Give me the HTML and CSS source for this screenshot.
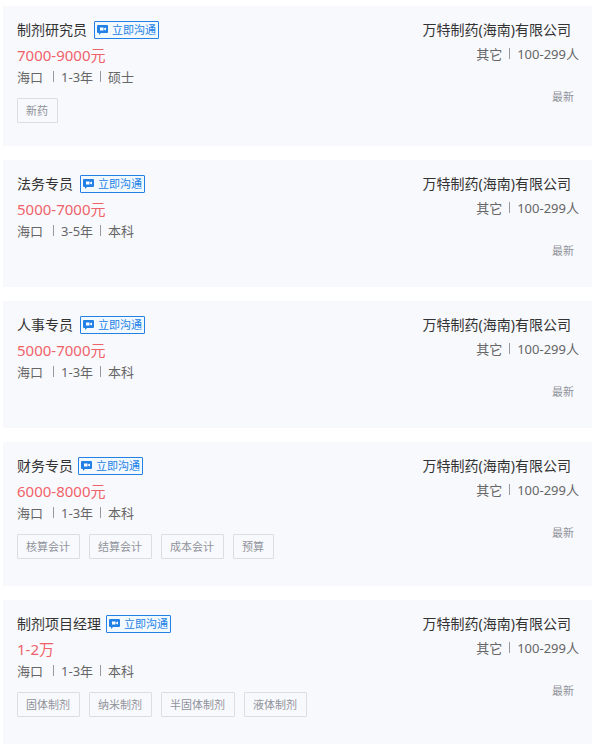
FILE: index.html
```html
<!DOCTYPE html>
<html lang="zh-CN">
<head>
  <meta charset="UTF-8" />
  <meta name="viewport" content="width=device-width, initial-scale=1.0"/>
  <title>万特制药(海南)有限公司 招聘职位</title>
  <link rel="stylesheet" href="styles.css">
</head>
<body>

<!-- chat icon shared by all the buttons -->
<svg class="sprite" aria-hidden="true">
  <symbol id="icon-chat" viewBox="0 0 11 10">
    <path fill="currentColor" d="M1 0h9a1 1 0 0 1 1 1v6a1 1 0 0 1-1 1H4l-2 2V8H1a1 1 0 0 1-1-1V1a1 1 0 0 1 1-1z"/>
    <path fill="#fff" d="M3 2.5h3.5v3H3zM7 3.5l2-1v3l-2-1z"/>
  </symbol>
</svg>

<main class="job-list">

  <article class="job-card short">
    <div class="job-info">
      <div class="job-head">
        <h2>制剂研究员</h2>
        <button type="button" class="chat-btn"><svg><use href="#icon-chat"/></svg>立即沟通</button>
      </div>
      <p class="salary">7000-9000元</p>
      <p class="meta"><span class="city">海口</span><span>1-3年</span><span>硕士</span></p>
      <ul class="tags">
        <li>新药</li>
      </ul>
    </div>
    <div class="company">
      <h3>万特制药(海南)有限公司</h3>
      <p class="meta"><span>其它</span><span>100-299人</span></p>
      <p class="date">最新</p>
    </div>
  </article>

  <article class="job-card">
    <div class="job-info">
      <div class="job-head">
        <h2>法务专员</h2>
        <button type="button" class="chat-btn"><svg><use href="#icon-chat"/></svg>立即沟通</button>
      </div>
      <p class="salary">5000-7000元</p>
      <p class="meta"><span class="city">海口</span><span>3-5年</span><span>本科</span></p>
    </div>
    <div class="company">
      <h3>万特制药(海南)有限公司</h3>
      <p class="meta"><span>其它</span><span>100-299人</span></p>
      <p class="date">最新</p>
    </div>
  </article>

  <article class="job-card">
    <div class="job-info">
      <div class="job-head">
        <h2>人事专员</h2>
        <button type="button" class="chat-btn"><svg><use href="#icon-chat"/></svg>立即沟通</button>
      </div>
      <p class="salary">5000-7000元</p>
      <p class="meta"><span class="city">海口</span><span>1-3年</span><span>本科</span></p>
    </div>
    <div class="company">
      <h3>万特制药(海南)有限公司</h3>
      <p class="meta"><span>其它</span><span>100-299人</span></p>
      <p class="date">最新</p>
    </div>
  </article>

  <article class="job-card">
    <div class="job-info">
      <div class="job-head tight">
        <h2>财务专员</h2>
        <button type="button" class="chat-btn"><svg><use href="#icon-chat"/></svg>立即沟通</button>
      </div>
      <p class="salary">6000-8000元</p>
      <p class="meta"><span class="city">海口</span><span>1-3年</span><span>本科</span></p>
      <ul class="tags">
        <li>核算会计</li>
        <li>结算会计</li>
        <li>成本会计</li>
        <li>预算</li>
      </ul>
    </div>
    <div class="company">
      <h3>万特制药(海南)有限公司</h3>
      <p class="meta"><span>其它</span><span>100-299人</span></p>
      <p class="date">最新</p>
    </div>
  </article>

  <article class="job-card">
    <div class="job-info">
      <div class="job-head tight">
        <h2>制剂项目经理</h2>
        <button type="button" class="chat-btn"><svg><use href="#icon-chat"/></svg>立即沟通</button>
      </div>
      <p class="salary">1-2万</p>
      <p class="meta"><span class="city">海口</span><span>1-3年</span><span>本科</span></p>
      <ul class="tags">
        <li>固体制剂</li>
        <li>纳米制剂</li>
        <li>半固体制剂</li>
        <li>液体制剂</li>
      </ul>
    </div>
    <div class="company">
      <h3>万特制药(海南)有限公司</h3>
      <p class="meta"><span>其它</span><span>100-299人</span></p>
      <p class="date">最新</p>
    </div>
  </article>

</main>

</body>
</html>
```
FILE: styles.css
```css
:root {
  --blue: #2381e6;
  --red: #f0626a;
  --card: #f8f9fd;
  --title: #333;
  --text: #666;
  --muted: #90939a;
  --line: #dcdde3;
}

* {
  box-sizing: border-box;
}

body {
  margin: 0;
  background: #fff;
  color: var(--text);
  font-family: "Noto Sans", "Noto Sans CJK SC", sans-serif;
  font-size: 13px;
}

h2, h3, p, ul {
  margin: 0;
  padding: 0;
  font-weight: 400;
}

.sprite {
  display: none;
}

.job-list {
  display: flex;
  flex-direction: column;
  gap: 14px;
  padding: 6px 4px 10px 3px;
}

.job-card {
  display: flex;
  justify-content: space-between;
  min-height: 127px;
  padding: 12px 13px 27px 14px;
  background: var(--card);
}

.job-card.short {
  padding-bottom: 23px;
}

.job-head {
  display: flex;
  align-items: center;
  gap: 7px;
  height: 24px;
}

.job-head.tight {
  gap: 5px;
}

h2, h3 {
  color: var(--title);
  font-size: 14px;
  line-height: 24px;
}

.chat-btn {
  display: flex;
  align-items: center;
  gap: 4px;
  height: 18px;
  padding: 0 2px;
  border: 1px solid var(--blue);
  border-radius: 1px;
  background: #f3faff;
  color: var(--blue);
  font-family: inherit;
  font-size: 11px;
  line-height: 16px;
  cursor: pointer;
}

.chat-btn svg {
  width: 11px;
  height: 10px;
}

.salary {
  color: var(--red);
  font-size: 15px;
  line-height: 26px;
}

.meta {
  display: flex;
  align-items: center;
  line-height: 18px;
}

/* thin divider between items */
.meta span + span::before {
  content: "";
  display: inline-block;
  width: 1px;
  height: 11px;
  margin: 0 7px;
  background: #999;
}

.meta .city {
  margin-right: 3px;
}

.tags {
  display: flex;
  flex-wrap: wrap;
  gap: 9px;
  margin-top: 12px;
  list-style: none;
}

.tags li {
  padding: 0 9px 0 8px;
  border: 1px solid var(--line);
  border-radius: 1px;
  color: var(--muted);
  font-size: 11px;
  line-height: 23px;
}

.company {
  display: flex;
  flex-direction: column;
  align-items: flex-end;
}

.company h3 {
  padding-right: 8px;
}

.company .meta {
  line-height: 24px;
}

.date {
  margin-top: 22px;
  padding-right: 5px;
  color: var(--muted);
  font-size: 11px;
  line-height: 18px;
}
```
